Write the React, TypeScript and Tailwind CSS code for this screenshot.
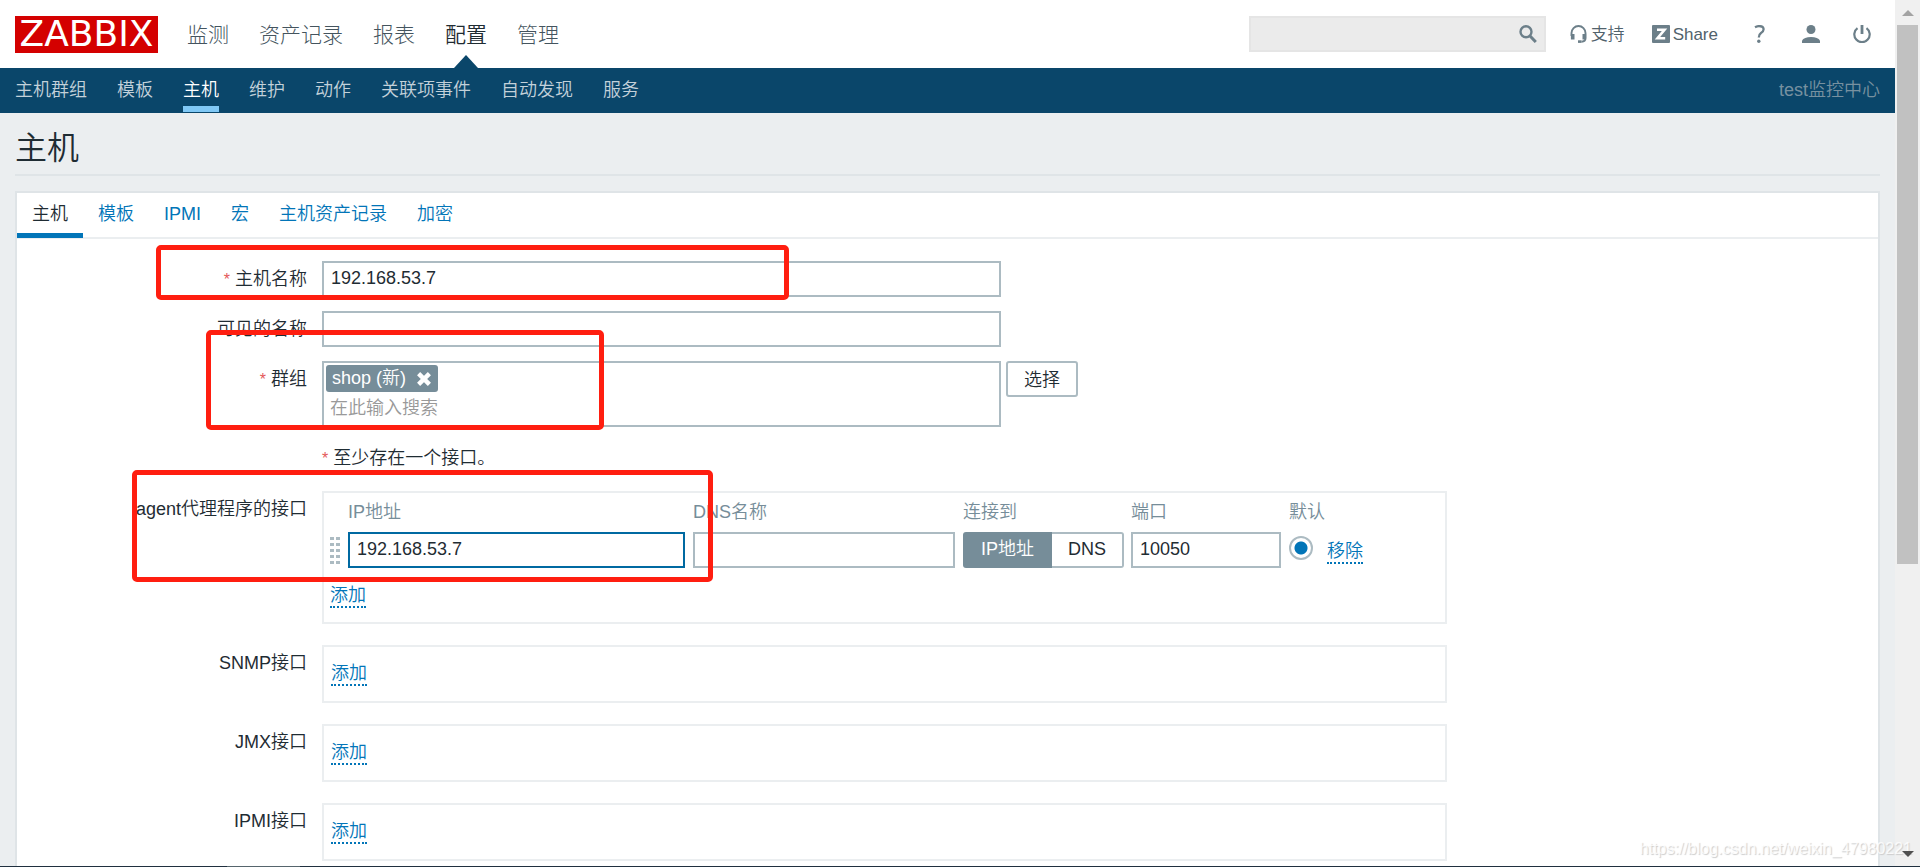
import React from "react";
import type { ReactNode } from "react";

const mainMenu = ["监测", "资产记录", "报表", "配置", "管理"];
const subMenu = ["主机群组", "模板", "主机", "维护", "动作", "关联项事件", "自动发现", "服务"];
const tabs = ["主机", "模板", "IPMI", "宏", "主机资产记录", "加密"];
const otherInterfaces = ["SNMP接口", "JMX接口", "IPMI接口"];

const field = "h-9 border-2 bg-white px-[7px] pb-[2px] text-[18px] text-[#1f2c33] outline-none";

function Star() {
  return <span className="mr-[5px] text-[16px] text-[#e45959]">*</span>;
}

function Row({ label, htmlFor, required, children }: { label?: string; htmlFor?: string; required?: boolean; children: ReactNode }) {
  return (
    <div className="grid grid-cols-[290px_minmax(0,1fr)] gap-[15px]">
      <div className="pt-[5px] text-right whitespace-nowrap">
        {label && (
          <label htmlFor={htmlFor}>
            {required && <Star />}
            {label}
          </label>
        )}
      </div>
      <div>{children}</div>
    </div>
  );
}

function LinkButton({ children }: { children: ReactNode }) {
  return (
    <button type="button" className="border-b-2 border-dotted border-[#0275b8] leading-[22px] text-[#0275b8]">
      {children}
    </button>
  );
}

function Header() {
  return (
    <header className="flex h-[68px] items-center bg-white pr-[15px] pl-[15px] text-[#6c7f89]">
      <a
        href="#"
        className="flex h-[37px] w-[143px] items-center justify-center bg-[#d40000] font-['DejaVu_Sans',sans-serif] text-[36px] leading-none font-normal text-white"
      >
        ZABBIX
      </a>
      <nav className="ml-[29px] flex h-full gap-[30px] text-[21px] font-light text-[#44545e]">
        {mainMenu.map((m) => (
          <a key={m} href="#" className={m === "配置" ? "relative flex items-center font-[350] text-[#1f2c33]" : "flex items-center"}>
            {m}
            {m === "配置" && (
              <svg className="absolute bottom-0 left-1/2 -ml-3" width="24" height="13" viewBox="0 0 24 13" aria-hidden="true">
                <path d="M12 0 24 13H0Z" fill="#0a466a" />
              </svg>
            )}
          </a>
        ))}
      </nav>
      <div className="ml-auto flex items-center">
        <form className="flex h-9 w-[297px] items-center border-2 border-[#e5e5e5] bg-[#ebebeb] pr-[7px]">
          <input aria-label="搜索" className="min-w-0 flex-1 bg-transparent px-2 text-[18px] outline-none" />
          <button type="button" aria-label="搜索">
            <svg width="18" height="18" viewBox="0 0 18 18" fill="none" stroke="#6c7f89" aria-hidden="true">
              <circle cx="7" cy="6.700" r="5.500" strokeWidth="2.400" />
              <path d="m10.800 10.800 6 6.200" strokeWidth="3" />
            </svg>
          </button>
        </form>
        <a href="#" className="ml-6 flex items-center gap-1 text-[17px] text-[#51626c]">
          <svg width="17" height="18" viewBox="0 0 17 18" fill="none" stroke="#6c7f89" aria-hidden="true">
            <path d="M1.500 11V8a7 7 0 0 1 14 0v5q0 3.500-4 3.800" strokeWidth="1.900" />
            <path d="M2.700 9v5.500M14.300 9v5.500" strokeWidth="3.600" />
            <path d="M8 16.600h3.500" strokeWidth="2.600" />
          </svg>
          支持
        </a>
        <a href="#" className="ml-[27px] flex items-center gap-[3px] text-[17px] text-[#51626c]">
          <svg width="18" height="18" viewBox="0 0 18 18" aria-hidden="true">
            <rect width="18" height="18" rx="1" fill="#6c7f89" />
            <path d="M5 4.800h7.500L5.500 13.200H13.200" fill="none" stroke="#fff" strokeWidth="2.600" />
          </svg>
          Share
        </a>
        <a href="#" aria-label="帮助" className="ml-9">
          <svg width="12" height="18" viewBox="0 0 12 18" fill="none" stroke="#6c7f89" aria-hidden="true">
            <path d="M1 2.200Q3 1.100 5 1.100C11 1.100 10.500 6 7 8Q4.800 9.500 4.800 12.500" strokeWidth="2.300" />
            <circle cx="4.800" cy="16.300" r="1.700" fill="#6c7f89" stroke="none" />
          </svg>
        </a>
        <a href="#" aria-label="用户" className="ml-9">
          <svg width="18" height="18" viewBox="0 0 18 18" fill="#6c7f89" aria-hidden="true">
            <circle cx="9" cy="4.500" r="4.500" />
            <path d="M0 18v-2.500q2-3.500 9-3.500t9 3.500V18z" />
          </svg>
        </a>
        <a href="#" aria-label="退出" className="mr-[9px] ml-[33px]">
          <svg width="18" height="18" viewBox="0 0 18 18" fill="none" stroke="#6c7f89" aria-hidden="true">
            <path d="M4.500 3.200a7.700 7.700 0 1 0 9 0" strokeWidth="2.200" />
            <path d="M9 0v9" strokeWidth="2.800" />
          </svg>
        </a>
      </div>
    </header>
  );
}

function AgentInterface() {
  return (
    <div className="max-w-[1125px] border-2 border-[#ebeef0] pt-[3px] pb-[2px] pl-[6px]">
      <table className="text-left">
        <thead>
          <tr className="h-[33px] text-[#768d99]">
            <td className="w-[18px]" />
            <th className="w-[345px] font-[350]">IP地址</th>
            <th className="w-[270px] font-[350]">DNS名称</th>
            <th className="w-[168px] font-[350]">连接到</th>
            <th className="w-[158px] font-[350]">端口</th>
            <th className="w-[38px] font-[350]">默认</th>
            <td />
          </tr>
        </thead>
        <tbody>
          <tr className="h-[42px]">
            <td>
              <svg width="10" height="27" viewBox="0 0 10 27" fill="#acbbc2" aria-hidden="true">
                {[0, 6, 12, 18, 24].map((y) => (
                  <path key={y} d={`M0 ${y}h4v3h-4zM6 ${y}h4v3h-4z`} />
                ))}
              </svg>
            </td>
            <td>
              <input aria-label="IP地址" defaultValue="192.168.53.7" className={`${field} w-[337px] border-[#0069a1]`} />
            </td>
            <td>
              <input aria-label="DNS名称" className={`${field} w-[262px] border-[#acbbc2]`} />
            </td>
            <td>
              <div className="flex h-9 w-[161px]">
                <button type="button" className="w-[89px] rounded-l-[3px] bg-[#768d99] pb-[2px] text-white">IP地址</button>
                <button type="button" className="flex-1 rounded-r-[3px] border-2 border-l-0 border-[#acbbc2] pb-[2px]">DNS</button>
              </div>
            </td>
            <td>
              <input aria-label="端口" defaultValue="10050" className={`${field} w-[150px] border-[#acbbc2]`} />
            </td>
            <td>
              <input
                type="radio"
                aria-label="默认"
                defaultChecked
                className="mb-1 block size-6 appearance-none rounded-full border-2 border-[#acbbc2] bg-white bg-[radial-gradient(circle,#0275b8_6px,transparent_7px)]"
              />
            </td>
            <td className="pt-[2px]">
              <LinkButton>移除</LinkButton>
            </td>
          </tr>
          <tr className="h-[49px]">
            <td colSpan={7}>
              <LinkButton>添加</LinkButton>
            </td>
          </tr>
        </tbody>
      </table>
    </div>
  );
}

function HostForm() {
  return (
    <form className="flex flex-col pt-[22px]">
      <div className="flex flex-col gap-[14px]">
        <Row label="主机名称" htmlFor="host" required>
          <input id="host" defaultValue="192.168.53.7" className={`${field} block w-[679px] border-[#acbbc2]`} />
        </Row>
        <Row label="可见的名称" htmlFor="visible">
          <input id="visible" className={`${field} block w-[679px] border-[#acbbc2]`} />
        </Row>
        <Row label="群组" htmlFor="groups" required>
          <div className="flex items-start gap-[5px]">
            <div className="h-[66px] w-[679px] border-2 border-[#acbbc2] p-[2px]">
              <span className="flex h-[27px] w-28 items-center justify-between rounded-[3px] bg-[#768d99] pr-[7px] pl-[6px] text-white">
                shop (新)
                <button type="button" aria-label="删除">
                  <svg width="14" height="14" viewBox="0 0 14 14" stroke="#fff" strokeWidth="4.400" aria-hidden="true">
                    <path d="m1.600 1.600 10.800 10.800M12.400 1.600 1.600 12.400" />
                  </svg>
                </button>
              </span>
              <input id="groups" placeholder="在此输入搜索" className="block h-8 w-full px-1 outline-none placeholder:text-[#999]" />
            </div>
            <button type="button" className="h-9 w-[72px] rounded-[3px] border-2 border-[#acbbc2] pt-[2px]">选择</button>
          </div>
        </Row>
        <Row>
          <p className="h-9 pt-1">
            <Star />
            至少存在一个接口。
          </p>
        </Row>
      </div>
      <div className="mt-[14px] flex flex-col gap-[21px]">
        <Row label="agent代理程序的接口">
          <AgentInterface />
        </Row>
        {otherInterfaces.map((name) => (
          <Row key={name} label={name}>
            <div className="h-[58px] max-w-[1125px] border-2 border-[#ebeef0] px-[7px] pt-[13px]">
              <LinkButton>添加</LinkButton>
            </div>
          </Row>
        ))}
      </div>
    </form>
  );
}

export default function App() {
  return (
    <div className="relative flex h-screen overflow-hidden bg-[#ebeef0] font-['Liberation_Sans','Noto_Sans_CJK_SC',sans-serif] text-[18px] leading-[27px] font-[350] text-[#1f2c33]">
      <div className="min-w-0 flex-1">
        <Header />
        <nav className="flex h-[45px] gap-[30px] bg-[#0a466a] px-[15px] text-[#c3d1da]">
          {subMenu.map((m) => (
            <a
              key={m}
              href="#"
              className={m === "主机" ? "mb-[1px] border-b-6 border-[#80c8f5] pt-[9px] text-white" : "pt-[9px]"}
            >
              {m}
            </a>
          ))}
          <span className="ml-auto pt-[9px] text-[#7791a0]">test监控中心</span>
        </nav>
        <main className="px-[15px]">
          <h1 className="flex h-[63px] items-center border-b-2 border-[#dfe4e7] pt-[9px] text-[32px]">主机</h1>
          <section className="mt-[15px] min-h-[760px] border-2 border-[#dfe4e7] bg-white">
            <nav className="flex h-[46px] border-b-2 border-[#ebeef0]">
              {tabs.map((t) => (
                <a
                  key={t}
                  href="#"
                  className={t === "主机" ? "h-[45px] border-b-5 border-[#0275b8] px-[15px] pt-2" : "h-[45px] px-[15px] pt-2 text-[#0275b8]"}
                >
                  {t}
                </a>
              ))}
            </nav>
            <HostForm />
          </section>
        </main>
      </div>

      <aside aria-hidden="true" className="flex w-[25px] flex-col items-center justify-between bg-[#f0f0f0] pt-[10px] pb-[10px]">
        <div className="flex flex-col items-center gap-[9px]">
          <svg width="12" height="6" viewBox="0 0 12 6" fill="#a3a3a3"><path d="m6 0 6 6H0z" /></svg>
          <div className="h-[539px] w-[21px] bg-[#c1c1c1]" />
        </div>
        <svg className="relative z-10" width="12" height="6" viewBox="0 0 12 6" fill="#505050"><path d="m6 6 6-6H0z" /></svg>
      </aside>

      <div className="pointer-events-none absolute top-[245px] left-[156px] h-[55px] w-[633px] rounded-[5px] border-5 border-[#ff1e10]" />
      <div className="pointer-events-none absolute top-[330px] left-[206px] h-[100px] w-[398px] rounded-[5px] border-5 border-[#ff1e10]" />
      <div className="pointer-events-none absolute top-[470px] left-[132px] h-[112px] w-[581px] rounded-[5px] border-5 border-[#ff1e10]" />
      <span className="pointer-events-none absolute right-2 bottom-[5px] text-[16px] text-white/80 [text-shadow:1px_1px_1px_#ccc]">
        https://blog.csdn.net/weixin_47980221
      </span>
      <div className="absolute bottom-0 left-0 h-px w-full bg-[#20303f]">
        <div className="ml-[227px] h-px w-[73px] bg-[#56656d]" />
      </div>
    </div>
  );
}
